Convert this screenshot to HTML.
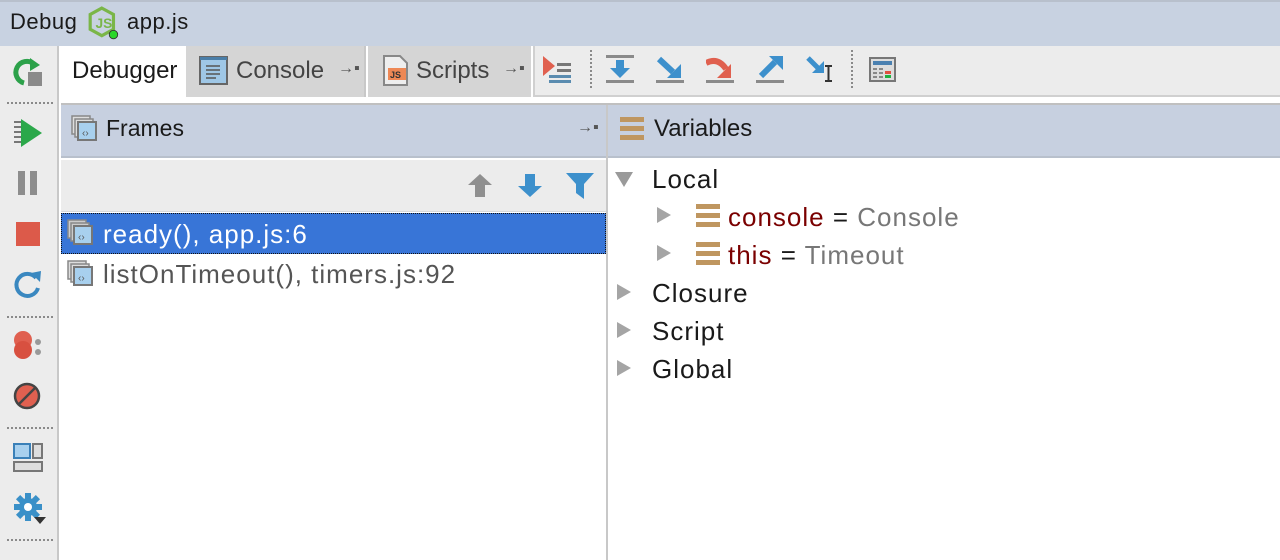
<!DOCTYPE html>
<html><head><style>
*{margin:0;padding:0;box-sizing:border-box}
body{width:1280px;height:560px;overflow:hidden;background:#fff;font-family:"Liberation Sans",sans-serif;position:relative;font-size:24px;color:#1a1a1a}
.abs{position:absolute}
.dots{position:absolute;left:7px;width:46px;border-top:2px dotted #8a8a8a}
.vd{position:absolute;top:50px;height:38px;border-left:2px dotted #8a8a8a}
.t{position:absolute;white-space:nowrap;line-height:1}
.big{font-size:26px;letter-spacing:1px}
.tri{position:absolute;width:0;height:0}
</style></head><body>
<div class="abs" style="left:0;top:0;width:1280px;height:46px;background:#c8d2e1;border-top:2px solid #b8c0cc"></div>
<div class="t" style="left:10px;top:11px;font-size:22px;letter-spacing:0.5px">Debug</div>
<svg class="abs" style="left:87px;top:6px" width="36" height="36" viewBox="0 0 34 34"><polygon points="14,2 25,8 25,22 14,28 3,22 3,8" fill="none" stroke="#7ab648" stroke-width="3"/><text x="8" y="21" font-size="13" font-family="Liberation Sans" fill="#7ab648" font-weight="bold">JS</text><circle cx="25" cy="27" r="4" fill="#2ad62a" stroke="#333" stroke-width="0.8"/></svg>
<div class="t" style="left:127px;top:11px;font-size:22px;letter-spacing:0.5px">app.js</div>
<div class="abs" style="left:0;top:46px;width:59px;height:514px;background:#ececec;border-right:2px solid #c8c8c8"></div>
<svg class="abs" style="left:12px;top:56px" width="32" height="32" viewBox="0 0 32 32"><path d="M22 8 A11 11 0 1 0 12 27" fill="none" stroke="#2ca14a" stroke-width="5"/><polygon points="18,2 28,9 18,15" fill="#2ca14a"/><rect x="16" y="16" width="14" height="14" fill="#8a8a8a"/></svg>
<div class="dots" style="top:102px"></div>
<svg class="abs" style="left:14px;top:118px" width="30" height="32"><g fill="#777"><rect x="0" y="3" width="7" height="2"/><rect x="0" y="8" width="7" height="2"/><rect x="0" y="13" width="7" height="2"/><rect x="0" y="18" width="7" height="2"/><rect x="0" y="23" width="7" height="2"/></g><polygon points="7,1 28,15 7,29" fill="#2ba84a"/></svg>
<div class="abs" style="left:18px;top:171px;width:7px;height:24px;background:#8d8d8d"></div>
<div class="abs" style="left:30px;top:171px;width:7px;height:24px;background:#8d8d8d"></div>
<div class="abs" style="left:16px;top:222px;width:24px;height:24px;background:#dc5a4a"></div>
<svg class="abs" style="left:12px;top:268px" width="32" height="32" viewBox="0 0 32 32"><path d="M24 10 A11 11 0 1 0 26 20" fill="none" stroke="#3a88c0" stroke-width="4"/><polygon points="19,5 29,3 28,14" fill="#3a88c0"/></svg>
<div class="dots" style="top:316px"></div>
<svg class="abs" style="left:12px;top:330px" width="34" height="34"><circle cx="11" cy="10" r="9" fill="#e06050"/><circle cx="11" cy="20" r="9" fill="#d85040"/><circle cx="26" cy="12" r="3" fill="#999"/><circle cx="26" cy="22" r="3" fill="#999"/></svg>
<svg class="abs" style="left:13px;top:382px" width="30" height="30"><circle cx="14" cy="14" r="12" fill="#e06050" stroke="#444" stroke-width="2.5"/><line x1="5" y1="23" x2="23" y2="5" stroke="#444" stroke-width="2.5"/></svg>
<div class="dots" style="top:427px"></div>
<svg class="abs" style="left:13px;top:443px" width="30" height="30"><rect x="1" y="1" width="16" height="14" fill="#a8d0ee" stroke="#3a80b8" stroke-width="2"/><rect x="20" y="1" width="9" height="14" fill="#ddd" stroke="#777" stroke-width="2"/><rect x="1" y="19" width="28" height="9" fill="#ddd" stroke="#777" stroke-width="2"/></svg>
<svg class="abs" style="left:14px;top:493px" width="34" height="34" viewBox="0 0 34 34"><g fill="#3a90c8"><circle cx="14" cy="14" r="9"/><rect x="11" y="0" width="6" height="28"/><rect x="0" y="11" width="28" height="6"/><rect x="11" y="0" width="6" height="28" transform="rotate(45 14 14)"/><rect x="11" y="0" width="6" height="28" transform="rotate(-45 14 14)"/></g><circle cx="14" cy="14" r="4" fill="#fff"/><polygon points="20,24 32,24 26,31" fill="#333"/></svg>
<div class="dots" style="top:539px"></div>
<div class="abs" style="left:61px;top:46px;width:1219px;height:58px;background:#fff"></div>
<div class="abs" style="left:533px;top:46px;width:747px;height:51px;background:#ececec;border-left:2px solid #d0d0d0;border-bottom:2px solid #d0d0d0"></div>
<div class="abs" style="left:61px;top:46px;width:125px;height:53px;background:#fff"></div>
<div class="t" style="left:72px;top:59px">Debugger</div>
<div class="abs" style="left:186px;top:46px;width:180px;height:51px;background:#d5d5d5;border-right:2px solid #c8c8c8"></div>
<svg class="abs" style="left:199px;top:56px" width="30" height="30"><rect x="1" y="1" width="27" height="27" fill="#9fc7e6" stroke="#666" stroke-width="2"/><rect x="1" y="1" width="27" height="3" fill="#4a7ea8"/><g stroke="#555" stroke-width="1.5"><line x1="7" y1="10" x2="21" y2="10"/><line x1="7" y1="14" x2="21" y2="14"/><line x1="7" y1="18" x2="21" y2="18"/><line x1="7" y1="22" x2="17" y2="22"/></g></svg>
<div class="t" style="left:236px;top:59px;color:#444">Console</div>
<div class="t" style="left:338px;top:61px;font-size:16px;color:#555">→▪</div>
<div class="abs" style="left:368px;top:46px;width:163px;height:51px;background:#d5d5d5"></div>
<svg class="abs" style="left:382px;top:55px" width="28" height="32"><path d="M2 1 H18 L25 8 V30 H2 Z" fill="#eee" stroke="#888" stroke-width="2"/><rect x="6" y="13" width="18" height="12" fill="#ee8855"/><text x="8" y="23" font-size="9" font-family="Liberation Sans" fill="#333" font-weight="bold">JS</text></svg>
<div class="t" style="left:416px;top:59px;color:#444">Scripts</div>
<div class="t" style="left:503px;top:61px;font-size:16px;color:#555">→▪</div>
<svg class="abs" style="left:543px;top:56px" width="32" height="28"><polygon points="0,0 12,10 0,20" fill="#e0604f"/><g fill="#777"><rect x="14" y="7" width="14" height="3"/><rect x="14" y="13" width="14" height="3"/></g><g fill="#5a8cb0"><rect x="6" y="19" width="22" height="3"/><rect x="6" y="24" width="22" height="3"/></g></svg>
<div class="vd" style="left:590px"></div>
<svg class="abs" style="left:606px;top:55px" width="30" height="30"><rect x="0" y="0" width="28" height="3" fill="#8a8a8a"/><rect x="0" y="25" width="28" height="3" fill="#8a8a8a"/><rect x="10" y="5" width="8" height="9" fill="#3d90cc"/><polygon points="4,13 24,13 14,23" fill="#3d90cc"/></svg>
<svg class="abs" style="left:656px;top:55px" width="30" height="30"><rect x="0" y="25" width="28" height="3" fill="#8a8a8a"/><line x1="3" y1="4" x2="17" y2="17" stroke="#3d90cc" stroke-width="6"/><polygon points="25,9 25,23 11,23" fill="#3d90cc"/></svg>
<svg class="abs" style="left:706px;top:55px" width="30" height="30"><rect x="0" y="25" width="28" height="3" fill="#8a8a8a"/><path d="M0 8 Q12 2 20 14" fill="none" stroke="#e0604f" stroke-width="6"/><polygon points="25,9 25,23 11,23" fill="#e0604f"/></svg>
<svg class="abs" style="left:756px;top:55px" width="30" height="30"><rect x="0" y="25" width="28" height="3" fill="#8a8a8a"/><line x1="5" y1="21" x2="19" y2="7" stroke="#3d90cc" stroke-width="6"/><polygon points="27,1 27,15 13,1" fill="#3d90cc"/></svg>
<svg class="abs" style="left:806px;top:55px" width="32" height="30"><line x1="2" y1="3" x2="12" y2="13" stroke="#3d90cc" stroke-width="5"/><polygon points="18,6 18,18 6,18" fill="#3d90cc"/><path d="M19 11 H26 M22.5 11 V26 M19 26 H26" stroke="#333" stroke-width="2" fill="none"/></svg>
<div class="vd" style="left:851px"></div>
<svg class="abs" style="left:869px;top:57px" width="28" height="26"><rect x="1" y="1" width="25" height="23" fill="#ddd" stroke="#777" stroke-width="2"/><rect x="4" y="4" width="19" height="4" fill="#4a80b0"/><g fill="#888"><rect x="4" y="11" width="4" height="2"/><rect x="10" y="11" width="4" height="2"/><rect x="4" y="15" width="4" height="2"/><rect x="10" y="15" width="4" height="2"/><rect x="4" y="19" width="4" height="2"/><rect x="10" y="19" width="4" height="2"/></g><rect x="16" y="14" width="6" height="3" fill="#e05040"/><rect x="16" y="18" width="6" height="3" fill="#20b040"/></svg>
<div class="abs" style="left:61px;top:103px;width:1219px;height:2px;background:#c0c0c0"></div>
<div class="abs" style="left:61px;top:105px;width:1219px;height:53px;background:#c7d0e0;border-bottom:2px solid #b8c0cc"></div>
<div class="abs" style="left:606px;top:105px;width:2px;height:455px;background:#c8c8c8"></div>
<svg class="abs" style="left:71px;top:115px" width="28" height="28"><rect x="1" y="1" width="18" height="18" fill="#ddd" stroke="#888" stroke-width="1.5"/><rect x="4" y="4" width="18" height="18" fill="#ddd" stroke="#888" stroke-width="1.5"/><rect x="7" y="7" width="18" height="18" fill="#a8d0ee" stroke="#777" stroke-width="2"/><text x="11" y="21" font-size="10" fill="#555" font-family="Liberation Sans">‹›</text></svg>
<div class="t" style="left:106px;top:117px;font-size:23px">Frames</div>
<div class="t" style="left:577px;top:120px;font-size:16px;color:#555">→▪</div>
<svg class="abs" style="left:620px;top:117px" width="24" height="24"><rect x="0" y="0" width="24" height="5" fill="#bf9660"/><rect x="0" y="9" width="24" height="5" fill="#bf9660"/><rect x="0" y="18" width="24" height="5" fill="#bf9660"/></svg>
<div class="t" style="left:654px;top:117px">Variables</div>
<div class="abs" style="left:61px;top:160px;width:545px;height:52px;background:#ececec;border-bottom:1px solid #d8d8d8"></div>
<svg class="abs" style="left:467px;top:173px" width="28" height="26"><polygon points="13,1 25,12 18,12 18,24 8,24 8,12 1,12" fill="#8f8f8f"/></svg>
<svg class="abs" style="left:517px;top:173px" width="28" height="26"><polygon points="13,24 25,13 18,13 18,1 8,1 8,13 1,13" fill="#3d90cc"/></svg>
<svg class="abs" style="left:566px;top:173px" width="30" height="28"><polygon points="0,0 28,0 18,11 18,26 10,20 10,11" fill="#3d90cc"/></svg>
<div class="abs" style="left:61px;top:213px;width:545px;height:41px;background:#3875d7;border:1.5px dotted #111"></div>
<svg class="abs" style="left:67px;top:219px" width="28" height="28"><rect x="1" y="1" width="18" height="18" fill="#ccc" stroke="#888" stroke-width="1.5"/><rect x="4" y="4" width="18" height="18" fill="#ccc" stroke="#888" stroke-width="1.5"/><rect x="7" y="7" width="18" height="18" fill="#a8d0ee" stroke="#777" stroke-width="2"/><text x="11" y="21" font-size="10" fill="#555" font-family="Liberation Sans">‹›</text></svg>
<div class="t big" style="left:103px;top:221px;color:#fff">ready(), app.js:6</div>
<svg class="abs" style="left:67px;top:260px" width="28" height="28"><rect x="1" y="1" width="18" height="18" fill="#ddd" stroke="#888" stroke-width="1.5"/><rect x="4" y="4" width="18" height="18" fill="#ddd" stroke="#888" stroke-width="1.5"/><rect x="7" y="7" width="18" height="18" fill="#a8d0ee" stroke="#777" stroke-width="2"/><text x="11" y="21" font-size="10" fill="#555" font-family="Liberation Sans">‹›</text></svg>
<div class="t big" style="left:103px;top:261px;color:#555">listOnTimeout(), timers.js:92</div>
<div class="tri" style="left:615px;top:172px;border-left:9px solid transparent;border-right:9px solid transparent;border-top:15px solid #9a9a9a"></div>
<div class="t big" style="left:652px;top:166px">Local</div>
<div class="tri" style="left:657px;top:207px;border-top:8px solid transparent;border-bottom:8px solid transparent;border-left:14px solid #a5a5a5"></div>
<svg class="abs" style="left:696px;top:204px" width="24" height="24"><rect x="0" y="0" width="24" height="5" fill="#bf9660"/><rect x="0" y="9" width="24" height="5" fill="#bf9660"/><rect x="0" y="18" width="24" height="5" fill="#bf9660"/></svg>
<div class="t big" style="left:728px;top:204px"><span style="color:#7a0000">console</span> = <span style="color:#777">Console</span></div>
<div class="tri" style="left:657px;top:245px;border-top:8px solid transparent;border-bottom:8px solid transparent;border-left:14px solid #a5a5a5"></div>
<svg class="abs" style="left:696px;top:242px" width="24" height="24"><rect x="0" y="0" width="24" height="5" fill="#bf9660"/><rect x="0" y="9" width="24" height="5" fill="#bf9660"/><rect x="0" y="18" width="24" height="5" fill="#bf9660"/></svg>
<div class="t big" style="left:728px;top:242px"><span style="color:#7a0000">this</span> = <span style="color:#777">Timeout</span></div>
<div class="tri" style="left:617px;top:284px;border-top:8px solid transparent;border-bottom:8px solid transparent;border-left:14px solid #a5a5a5"></div>
<div class="t big" style="left:652px;top:280px">Closure</div>
<div class="tri" style="left:617px;top:322px;border-top:8px solid transparent;border-bottom:8px solid transparent;border-left:14px solid #a5a5a5"></div>
<div class="t big" style="left:652px;top:318px">Script</div>
<div class="tri" style="left:617px;top:360px;border-top:8px solid transparent;border-bottom:8px solid transparent;border-left:14px solid #a5a5a5"></div>
<div class="t big" style="left:652px;top:356px">Global</div>
</body></html>
